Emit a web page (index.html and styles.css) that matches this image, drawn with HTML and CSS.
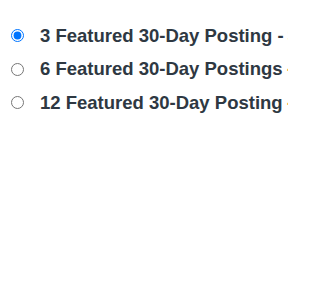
FILE: index.html
```html
<!DOCTYPE html>
<html>
<head>
<meta charset="utf-8">
<link rel="stylesheet" href="styles.css">
</head>
<body>
<form class="options">
  <label class="option"><input type="radio" name="pkg" checked><span class="text">3 Featured 30-Day Posting - <span class="price">$75</span></span></label>
  <label class="option"><input type="radio" name="pkg"><span class="text">6 Featured 30-Day Postings<span class="price"> - $135</span></span></label>
  <label class="option"><input type="radio" name="pkg"><span class="text">12 Featured 30-Day Posting<span class="price"> - $240</span></span></label>
</form>
</body>
</html>
```
FILE: styles.css
```css
html, body {
  margin: 0;
  padding: 0;
  background: #fff;
  width: 288px;
  height: 288px;
  overflow: hidden;
}
.options {
  display: flex;
  flex-direction: column;
  gap: 10px;
  padding: 24px 0 0 8px;
  width: 280px;
  overflow: hidden;
}
.option {
  display: flex;
  align-items: center;
  height: 23.5px;
  white-space: nowrap;
  font-family: "Liberation Sans", Arial, sans-serif;
  font-weight: bold;
  font-size: 18.5px;
  color: #2e3842;
}
.option input {
  margin: 0 16px 0 3px;
  width: 13px;
  height: 13px;
  flex: none;
}
.price {
  color: #f0a040;
  margin-left: -1px;
}
```
